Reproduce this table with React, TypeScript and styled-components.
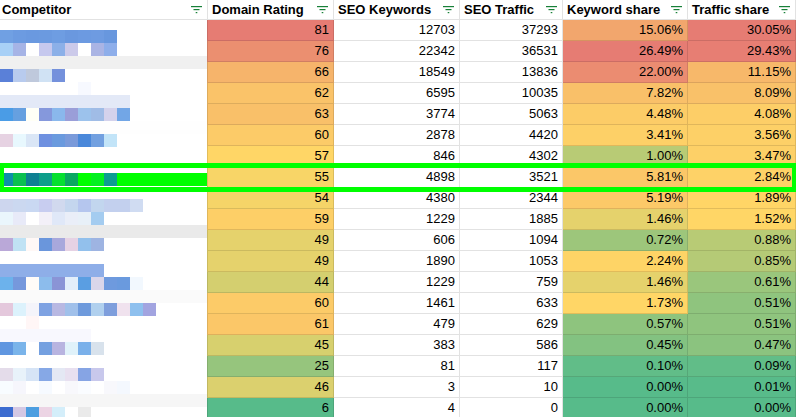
import React from 'react';
import styled, { createGlobalStyle } from 'styled-components';

const GlobalStyle = createGlobalStyle`
  html, body {
    margin: 0;
    padding: 0;
    background: #fff;
    overflow: hidden;
  }
  body {
    font-family: 'Liberation Sans', Arial, sans-serif;
    font-size: 13px;
    color: #000;
  }
`;

const GRID = 'rgba(0, 0, 0, 0.115)';
const HILITE = '#00ff00';
const BLOCK = 13;

// Google Sheets default colour scale: min green, median yellow, max red
const GREEN = [87, 187, 138];
const YELLOW = [255, 214, 102];
const RED = [230, 124, 115];

type Row = { dr: number; kw: number; tr: number; ks: number; ts: number };

const rows: Row[] = [
  { dr: 81, kw: 12703, tr: 37293, ks: 15.06, ts: 30.05 },
  { dr: 76, kw: 22342, tr: 36531, ks: 26.49, ts: 29.43 },
  { dr: 66, kw: 18549, tr: 13836, ks: 22.0, ts: 11.15 },
  { dr: 62, kw: 6595, tr: 10035, ks: 7.82, ts: 8.09 },
  { dr: 63, kw: 3774, tr: 5063, ks: 4.48, ts: 4.08 },
  { dr: 60, kw: 2878, tr: 4420, ks: 3.41, ts: 3.56 },
  { dr: 57, kw: 846, tr: 4302, ks: 1.0, ts: 3.47 },
  { dr: 55, kw: 4898, tr: 3521, ks: 5.81, ts: 2.84 },
  { dr: 54, kw: 4380, tr: 2344, ks: 5.19, ts: 1.89 },
  { dr: 59, kw: 1229, tr: 1885, ks: 1.46, ts: 1.52 },
  { dr: 49, kw: 606, tr: 1094, ks: 0.72, ts: 0.88 },
  { dr: 49, kw: 1890, tr: 1053, ks: 2.24, ts: 0.85 },
  { dr: 44, kw: 1229, tr: 759, ks: 1.46, ts: 0.61 },
  { dr: 60, kw: 1461, tr: 633, ks: 1.73, ts: 0.51 },
  { dr: 61, kw: 479, tr: 629, ks: 0.57, ts: 0.51 },
  { dr: 45, kw: 383, tr: 586, ks: 0.45, ts: 0.47 },
  { dr: 25, kw: 81, tr: 117, ks: 0.1, ts: 0.09 },
  { dr: 46, kw: 3, tr: 10, ks: 0.0, ts: 0.01 },
  { dr: 6, kw: 4, tr: 0, ks: 0.0, ts: 0.0 },
];

const HIGHLIGHT_ROW = 7;

const mix = (a: number[], b: number[], t: number) =>
  `rgb(${a.map((v, i) => Math.round(v + (b[i] - v) * t)).join(',')})`;

const makeScale = (values: number[]) => {
  const sorted = [...values].sort((a, b) => a - b);
  const min = sorted[0];
  const max = sorted[sorted.length - 1];
  const mid = sorted[Math.floor(sorted.length / 2)];
  return (v: number) => {
    if (v >= mid) return mix(YELLOW, RED, max === mid ? 0 : (v - mid) / (max - mid));
    return mix(YELLOW, GREEN, mid === min ? 0 : (mid - v) / (mid - min));
  };
};

const drScale = makeScale(rows.map((r) => r.dr));
const ksScale = makeScale(rows.map((r) => r.ks));
const tsScale = makeScale(rows.map((r) => r.ts));

// pixelated competitor names, one entry per 13px band (starting 10px below the header)
const full = (c: string) => Array(16).fill(c);
const W = '#ffffff';
const mosaic: string[][] = [
  ['#70a0e3', '#6c9be1', '#6a99e0', '#6b9ae0', '#6e9de2', '#6a98df', '#6c9ae1', '#6e9be1', '#6897de'],
  ['#a8d0f6', '#a6b4e6', W, '#c6c8ee', '#8cb0e8', '#cccaea', W, '#aab4e4', '#8eaeea'],
  full('#f0f0f0'),
  ['#5a80d8', '#b8cbee', '#bfc9dc', '#d0e2f4', '#7491dc'],
  [W, W, W, W, W, W, '#f7f9ff'],
  Array(10).fill('#e3e9f7'),
  ['#4a9ce6', '#66a0e0', '#fffff6', '#8598dc', '#8ab8ec', '#9a9ed8', '#9cc2ec', '#a0bce6', '#d4d2ec', '#72a6e6'],
  full('#fefefe'),
  ['#e6d2e2', '#e8f8fe', '#dae6f6', '#6e90e0', '#6a9ade', '#7a9ada', '#4a88da', '#72a0e0', '#c2e4f8'],
  [],
  [],
  ['#0d8fa8', '#0bc050', '#0e8092', '#0d9e8a', '#05e030', '#0aa862', HILITE, '#03f020', '#0d9c92', ...Array(7).fill(HILITE)],
  [],
  ['#cdd6ee', '#cbd8f0', '#c9d8f2', '#c8cdf0', '#d1d9ee', '#c4d6ee', '#b5c6ee', '#c2d6ee', '#c3d0ee', '#c3d0ee', '#d0dcf2'],
  ['#eaf6fc', '#e8eaf8', W, '#f3f0f8', '#e0e8f8', '#eaeef8', '#e8f0f8', '#a4ccf0'],
  full('#eaeaea'),
  ['#baa8d8', '#c0e2f4', '#fff8f6', '#6a96dc', '#a8a8dc', '#e6d2e4', '#92c0ec', '#9eb4e2'],
  [],
  Array(8).fill('#8eaee8'),
  ['#6cb2ec', '#7698dc', '#fffcf8', '#8cbcec', '#8a94d6', '#e2eefa', '#5a9ee2', '#dad6ea', '#6e9ade', '#6a9ade', '#f2f8fe'],
  full('#fafafa'),
  ['#e4c8dc', '#dcf2fc', '#f4f4fa', '#7ea2e2', '#b8b8e2', '#a0c0ea', '#6e9adc', '#b0d0ee', '#7e9edc', '#f0e2ee', '#8ec0ee', '#a2a4e0'],
  [W, W, '#fff6f6'],
  Array(7).fill('#f8f8fe'),
  ['#6096e0', '#7ab4ea', W, '#74a0e0', '#b8b4e0', '#e0f2fa', '#7ab0ea', '#d8e2ec'],
  [],
  ['#e4dcea', '#e8f2fa', '#d6e4f6', '#86a8e6', '#e4e8f4', '#e8e0f0', '#86a4e4', '#c8c8ec'],
  ['#f8fcff', '#f6f6fc', W, '#f6faff', W, '#f8f8fc', '#fafcff', W, '#f8f8fc', '#f4f8fe'],
  full('#f6f6f6'),
  ['#3c6cd0', '#d4c8e4', '#4c9ee0', '#ecd4e4', '#d4eefa', W, '#eaeaea'],
];

const Sheet = styled.div`
  width: 796px;
  background: #fff;
`;

const HeaderRow = styled.div`
  display: grid;
  grid-template-columns: 208px 126px 126px 103px 125px 108px;
  height: 20px;
`;

const HeaderCell = styled.div<{ $first?: boolean }>`
  display: flex;
  align-items: center;
  justify-content: space-between;
  box-sizing: border-box;
  padding: 0 5px 0 ${(p) => (p.$first ? '2px' : '4px')};
  border-right: 1px solid ${GRID};
  border-bottom: 1px solid ${GRID};
  font-weight: bold;
  line-height: 19px;
  white-space: nowrap;
`;

const Body = styled.div`
  position: relative;
  display: flex;
`;

const Mosaic = styled.svg`
  display: block;
  flex: none;
`;

const DataTable = styled.div`
  display: flex;
  flex-direction: column;
`;

const DataRow = styled.div`
  display: grid;
  grid-template-columns: 127px 126px 103px 125px 108px;
  height: 21px;
`;

const Cell = styled.div<{ $bg?: string }>`
  box-sizing: border-box;
  padding-right: 4px;
  background: ${(p) => p.$bg || '#fff'};
  border-right: 1px solid ${GRID};
  border-bottom: 1px solid ${GRID};
  line-height: 20px;
  text-align: right;

  &:first-child {
    border-left: 1px solid ${GRID};
  }
`;

const Highlight = styled.div<{ $row: number }>`
  position: absolute;
  left: 0;
  right: 0;
  top: ${(p) => p.$row * 21 - 4}px;
  height: 29px;
  box-sizing: border-box;
  border-style: solid;
  border-color: ${HILITE};
  border-width: 5px 4px;
  pointer-events: none;
`;

const FilterIcon = () => (
  <svg width="11" height="8" viewBox="0 0 11 8" style={{ flex: 'none' }}>
    <g fill="#188038">
      <rect x="0" y="0" width="11" height="1.2" />
      <rect x="2.5" y="3" width="6" height="1.2" />
      <rect x="4.7" y="6" width="1.6" height="1.2" />
    </g>
  </svg>
);

const headers = ['Competitor', 'Domain Rating', 'SEO Keywords', 'SEO Traffic', 'Keyword share', 'Traffic share'];

const pct = (v: number) => `${v.toFixed(2)}%`;

const App = () => {
  const bodyHeight = rows.length * 21;
  return (
    <Sheet>
      <GlobalStyle />
      <HeaderRow>
        {headers.map((h, i) => (
          <HeaderCell key={h} $first={i === 0}>
            <span>{h}</span>
            <FilterIcon />
          </HeaderCell>
        ))}
      </HeaderRow>
      <Body>
        <Mosaic width={207} height={bodyHeight} viewBox={`0 0 207 ${bodyHeight}`} shapeRendering="crispEdges">
          {mosaic.map((band, r) =>
            band.map((c, k) =>
              c === W ? null : (
                <rect key={`${r}-${k}`} x={k * BLOCK} y={10 + r * BLOCK} width={BLOCK} height={BLOCK} fill={c} />
              ),
            ),
          )}
        </Mosaic>
        <DataTable>
          {rows.map((r, i) => (
            <DataRow key={i}>
              <Cell $bg={drScale(r.dr)}>{r.dr}</Cell>
              <Cell>{r.kw}</Cell>
              <Cell>{r.tr}</Cell>
              <Cell $bg={ksScale(r.ks)}>{pct(r.ks)}</Cell>
              <Cell $bg={tsScale(r.ts)}>{pct(r.ts)}</Cell>
            </DataRow>
          ))}
        </DataTable>
        <Highlight $row={HIGHLIGHT_ROW} />
      </Body>
    </Sheet>
  );
};

export default App;
